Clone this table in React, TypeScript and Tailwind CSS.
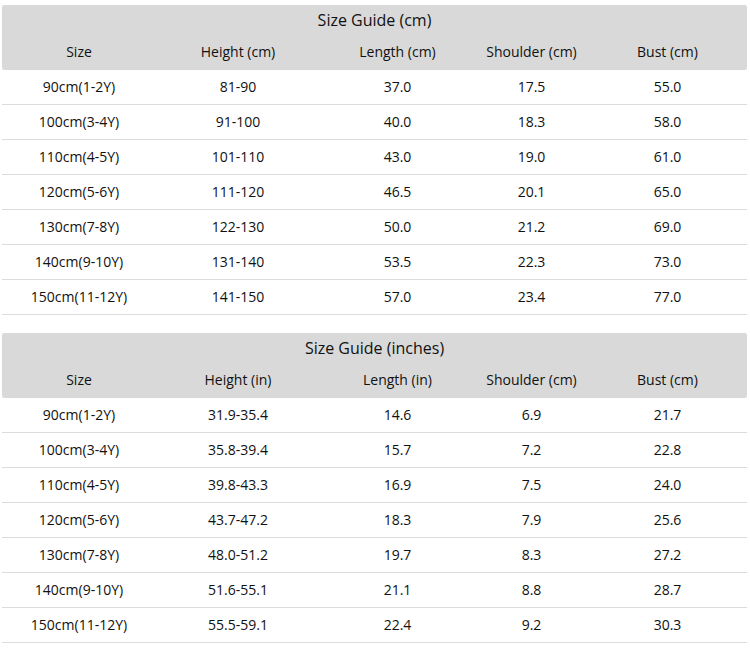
const cmRows = [
  ["90cm(1-2Y)", "81-90", "37.0", "17.5", "55.0"],
  ["100cm(3-4Y)", "91-100", "40.0", "18.3", "58.0"],
  ["110cm(4-5Y)", "101-110", "43.0", "19.0", "61.0"],
  ["120cm(5-6Y)", "111-120", "46.5", "20.1", "65.0"],
  ["130cm(7-8Y)", "122-130", "50.0", "21.2", "69.0"],
  ["140cm(9-10Y)", "131-140", "53.5", "22.3", "73.0"],
  ["150cm(11-12Y)", "141-150", "57.0", "23.4", "77.0"],
];

const inchRows = [
  ["90cm(1-2Y)", "31.9-35.4", "14.6", "6.9", "21.7"],
  ["100cm(3-4Y)", "35.8-39.4", "15.7", "7.2", "22.8"],
  ["110cm(4-5Y)", "39.8-43.3", "16.9", "7.5", "24.0"],
  ["120cm(5-6Y)", "43.7-47.2", "18.3", "7.9", "25.6"],
  ["130cm(7-8Y)", "48.0-51.2", "19.7", "8.3", "27.2"],
  ["140cm(9-10Y)", "51.6-55.1", "21.1", "8.8", "28.7"],
  ["150cm(11-12Y)", "55.5-59.1", "22.4", "9.2", "30.3"],
];

const cols = "grid grid-cols-[154px_164px_155px_113px_159px]";

function SizeTable({ title, headers, rows }: { title: string; headers: string[]; rows: string[][] }) {
  return (
    <div className="w-[745px]">
      <div className="bg-[#d9d9d9] rounded-[2px]">
        <div className="h-[30px] flex items-center justify-center text-[16px] pb-[1px]">{title}</div>
        <div className={`${cols} h-[35px] items-center text-center pb-[2px]`}>
          {headers.map((h) => (
            <div key={h}>{h}</div>
          ))}
        </div>
      </div>
      {rows.map((r) => (
        <div key={r[0]} className={`${cols} h-[35px] items-center text-center border-b border-[#dcdcdc] pb-[2px]`}>
          {r.map((c, i) => (
            <div key={i}>{c}</div>
          ))}
        </div>
      ))}
    </div>
  );
}

export default function App() {
  return (
    <div
      className="w-[750px] h-[648px] bg-white text-[#111] text-[14px] pl-[2px] pt-[5px] flex flex-col gap-[18px]"
      style={{ fontFamily: '"Open Sans", "Noto Sans", sans-serif' }}
    >
      <SizeTable
        title="Size Guide (cm)"
        headers={["Size", "Height (cm)", "Length (cm)", "Shoulder (cm)", "Bust (cm)"]}
        rows={cmRows}
      />
      <SizeTable
        title="Size Guide (inches)"
        headers={["Size", "Height (in)", "Length (in)", "Shoulder (cm)", "Bust (cm)"]}
        rows={inchRows}
      />
    </div>
  );
}
